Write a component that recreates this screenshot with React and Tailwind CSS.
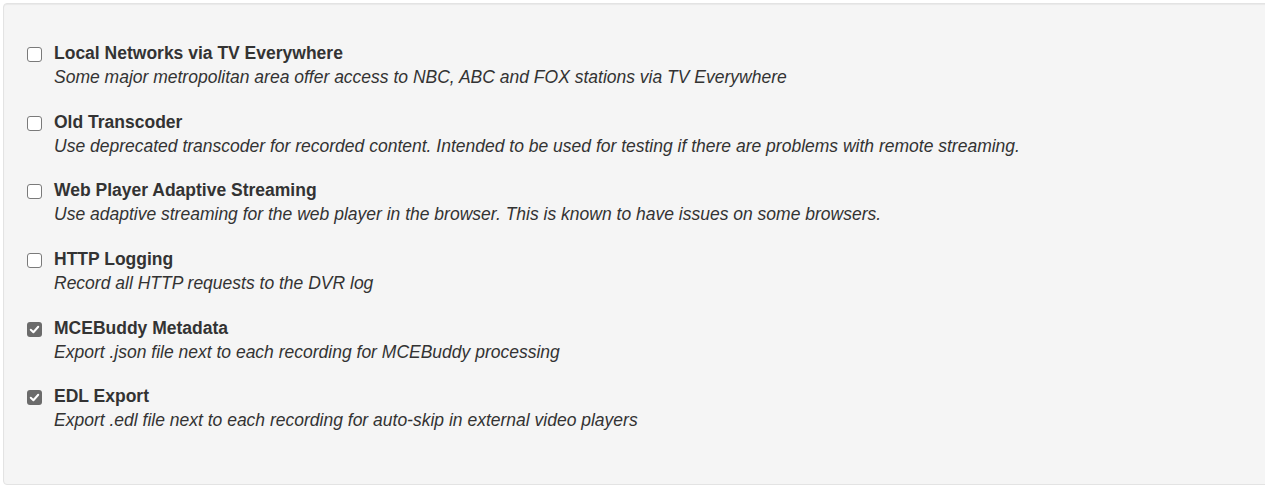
const OPTIONS = [
  {
    title: "Local Networks via TV Everywhere",
    desc: "Some major metropolitan area offer access to NBC, ABC and FOX stations via TV Everywhere",
    checked: false,
  },
  {
    title: "Old Transcoder",
    desc: "Use deprecated transcoder for recorded content. Intended to be used for testing if there are problems with remote streaming.",
    checked: false,
  },
  {
    title: "Web Player Adaptive Streaming",
    desc: "Use adaptive streaming for the web player in the browser. This is known to have issues on some browsers.",
    checked: false,
  },
  {
    title: "HTTP Logging",
    desc: "Record all HTTP requests to the DVR log",
    checked: false,
  },
  {
    title: "MCEBuddy Metadata",
    desc: "Export .json file next to each recording for MCEBuddy processing",
    checked: true,
  },
  {
    title: "EDL Export",
    desc: "Export .edl file next to each recording for auto-skip in external video players",
    checked: true,
  },
];

function Box({ checked }) {
  if (checked) {
    return (
      <span className="mt-[6px] flex h-[15px] w-[15px] shrink-0 items-center justify-center rounded-[3px] bg-[#6b6b6b]">
        <svg width="11" height="11" viewBox="0 0 10 10" fill="none">
          <path d="M1.6 5.2 L4 7.5 L8.4 2.5" stroke="white" strokeWidth="1.8" strokeLinecap="round" strokeLinejoin="round" />
        </svg>
      </span>
    );
  }
  return <span className="mt-[6px] h-[15px] w-[15px] shrink-0 rounded-[3px] border border-[#7a7a7a] bg-white" />;
}

export default function App() {
  return (
    <div className="h-[493px] overflow-hidden bg-white pl-[3px] pt-[3px] font-['Liberation_Sans',Arial,sans-serif] text-[17.5px] leading-[24px] text-[#333]">
      <div className="w-[1275px] h-[482px] rounded-[4px] border border-[#e3e3e3] bg-[#f5f5f5] shadow-[inset_0_1px_1px_rgba(0,0,0,0.05)] pl-[23px] pt-[37px]">
        <div className="flex flex-col gap-[20.7px]">
          {OPTIONS.map((o) => (
            <label key={o.title} className="flex gap-[12px]">
              <Box checked={o.checked} />
              <div>
                <div className="font-bold">{o.title}</div>
                <div className="italic">{o.desc}</div>
              </div>
            </label>
          ))}
        </div>
      </div>
    </div>
  );
}
